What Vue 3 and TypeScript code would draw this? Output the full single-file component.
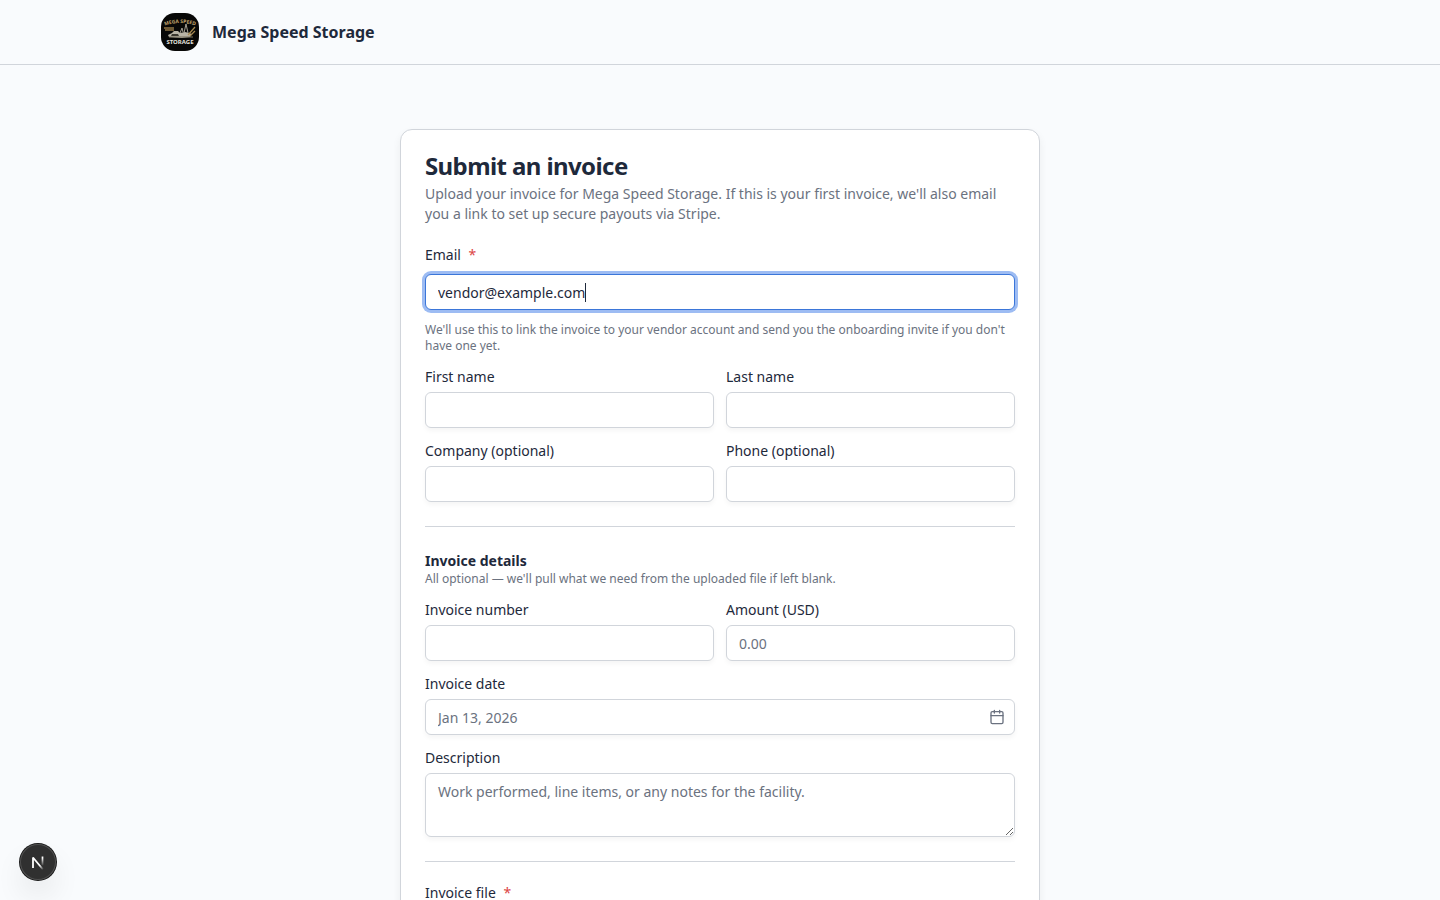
<script setup lang="ts">
import { onMounted, ref, watch } from 'vue'

interface Field {
  id: string
  label: string
  placeholder?: string
  inputmode?: 'text' | 'decimal' | 'tel'
}

const CONTROL_INSET = 13

const email = ref('vendor@example.com')
const emailInput = ref<HTMLInputElement | null>(null)
const emailFocused = ref(false)
const caretLeft = ref(0)

const contactFields: Field[] = [
  { id: 'first-name', label: 'First name' },
  { id: 'last-name', label: 'Last name' },
  { id: 'company', label: 'Company (optional)' },
  { id: 'phone', label: 'Phone (optional)', inputmode: 'tel' },
]

const invoiceFields: Field[] = [
  { id: 'invoice-number', label: 'Invoice number' },
  { id: 'amount', label: 'Amount (USD)', placeholder: '0.00', inputmode: 'decimal' },
]

// The caret is drawn as its own bar, placed after the measured text.
function placeCaret() {
  const input = emailInput.value
  const context = document.createElement('canvas').getContext('2d')
  if (!input || !context) return
  context.font = getComputedStyle(input).font
  const position = input.selectionStart ?? email.value.length
  caretLeft.value = CONTROL_INSET + Math.round(context.measureText(email.value.slice(0, position)).width)
}

watch(email, placeCaret, { flush: 'post' })

onMounted(() => {
  const input = emailInput.value
  if (!input) return
  input.focus({ preventScroll: true })
  input.setSelectionRange(email.value.length, email.value.length)
  placeCaret()
})
</script>

<template>
  <div class="page">
    <header class="topbar">
      <div class="topbar-inner">
        <svg class="brand-logo" viewBox="0 0 40 40" aria-hidden="true">
          <defs>
            <path id="brand-arc" d="M1 15 Q20 7 39 15" />
          </defs>
          <rect x="1" y="1" width="38" height="38" rx="14" fill="#080807" />
          <text class="logo-top"><textPath href="#brand-arc" startOffset="50%" text-anchor="middle">MEGA SPEED</textPath></text>
          <path d="M4 16h10M5 18h9" stroke="#8f7445" stroke-width="1.3" />
          <path d="M8 23l4-2 2-2h4l2 2 5-1 4 1 3 1-2 3-8 1-13-1z" fill="#b9b4a6" />
          <path d="M12 22h6l1 2h-8z" fill="#3b382f" />
          <path d="M20 21l2-5 1 4M24 21l2-9 2 9" fill="none" stroke="#a5a093" stroke-width="1" />
          <path d="M28 23l7-8M30 24l5-5" stroke="#a88a50" stroke-width="1.2" />
          <path d="M9 25h24" stroke="#77705f" stroke-width="1" />
          <text class="logo-bottom" x="20" y="32" text-anchor="middle">STORAGE</text>
        </svg>
        <span class="brand-name">Mega Speed Storage</span>
      </div>
    </header>

    <main class="content">
      <form class="card" @submit.prevent>
        <div class="card-header">
          <h1>Submit an invoice</h1>
          <p>
            Upload your invoice for Mega Speed Storage. If this is your first invoice, we'll also email
            you a link to set up secure payouts via Stripe.
          </p>
        </div>

        <section class="group">
          <div class="field field-email">
            <label for="email">Email <span class="required">*</span></label>
            <div class="control-wrap">
              <input
                id="email"
                ref="emailInput"
                v-model="email"
                class="control email"
                type="text"
                inputmode="email"
                required
                spellcheck="false"
                @focus="emailFocused = true"
                @blur="emailFocused = false"
                @keyup="placeCaret"
                @click="placeCaret"
              />
              <span v-if="emailFocused" class="caret" :style="{ left: caretLeft + 'px' }"></span>
            </div>
            <p class="hint">
              We'll use this to link the invoice to your vendor account and send you the onboarding invite if you don't
              have one yet.
            </p>
          </div>
          <div class="columns">
            <div v-for="field in contactFields" :key="field.id" class="field">
              <label :for="field.id">{{ field.label }}</label>
              <input :id="field.id" class="control" type="text" :inputmode="field.inputmode" />
            </div>
          </div>
        </section>

        <hr />

        <section class="group">
          <div>
            <h2>Invoice details</h2>
            <p class="hint">All optional — we'll pull what we need from the uploaded file if left blank.</p>
          </div>
          <div class="columns">
            <div v-for="field in invoiceFields" :key="field.id" class="field">
              <label :for="field.id">{{ field.label }}</label>
              <input :id="field.id" class="control" type="text" :inputmode="field.inputmode" :placeholder="field.placeholder" />
            </div>
          </div>
          <div class="field">
            <label for="invoice-date">Invoice date</label>
            <div class="control-wrap">
              <input id="invoice-date" class="control date" type="text" placeholder="Jan 13, 2026" />
              <button class="date-button" type="button" aria-label="Select date">
                <svg viewBox="0 0 24 24" aria-hidden="true">
                  <path d="M8 2v4M16 2v4M3 10h18" />
                  <rect x="3" y="4" width="18" height="18" rx="2" />
                </svg>
              </button>
            </div>
          </div>
          <div class="field">
            <label for="description">Description</label>
            <textarea id="description" class="control" placeholder="Work performed, line items, or any notes for the facility."></textarea>
          </div>
        </section>

        <hr />

        <div class="field">
          <label for="invoice-file">Invoice file <span class="required">*</span></label>
          <input id="invoice-file" class="control" type="file" />
        </div>
      </form>
    </main>

    <button class="dev-badge" type="button" aria-label="Developer tools">
      <svg viewBox="0 0 36 36" aria-hidden="true">
        <defs>
          <linearGradient id="fade-diagonal" gradientUnits="userSpaceOnUse" x1="18" y1="18" x2="24" y2="25">
            <stop offset="0.4" stop-color="#fff" />
            <stop offset="1" stop-color="#fff" stop-opacity="0" />
          </linearGradient>
          <linearGradient id="fade-stem" gradientUnits="userSpaceOnUse" x1="0" y1="12" x2="0" y2="22">
            <stop offset="0.2" stop-color="#fff" />
            <stop offset="1" stop-color="#fff" stop-opacity="0" />
          </linearGradient>
        </defs>
        <path d="M13 24V13.5L23 25.5" fill="none" stroke="url(#fade-diagonal)" stroke-width="1.8" stroke-linejoin="bevel" />
        <path d="M22.5 12.5v9" stroke="url(#fade-stem)" stroke-width="1.7" />
      </svg>
    </button>
  </div>
</template>

<style>
html {
  scrollbar-width: none;
}
body {
  background: #f9fbfd;
}
</style>

<style scoped>
* {
  box-sizing: border-box;
}
.page {
  min-height: 100vh;
  background: #f9fbfd;
  color: #1e293b;
  font-family: 'Noto Sans', sans-serif;
  font-size: 14px;
  line-height: 20px;
}
h1,
h2,
p {
  margin: 0;
}
.topbar {
  border-bottom: 1px solid #d1d5db;
}
.topbar-inner {
  display: flex;
  align-items: center;
  gap: 12px;
  height: 64px;
  max-width: 1152px;
  margin: 0 auto;
  padding: 0 16px;
}
.brand-logo {
  width: 40px;
  height: 40px;
}
.logo-top {
  font-family: 'Open Sans', sans-serif;
  font-size: 5px;
  font-weight: 700;
  fill: #c2a56d;
}
.logo-bottom {
  font-family: 'Noto Sans', sans-serif;
  font-size: 6px;
  font-weight: 700;
  fill: #e5e4df;
}
.brand-name {
  font-size: 16px;
  font-weight: 700;
  line-height: 24px;
}
.content {
  padding: 64px 16px;
}
.card {
  display: flex;
  flex-direction: column;
  gap: 24px;
  max-width: 640px;
  margin: 0 auto;
  padding: 24px;
  border: 1px solid #d1d5db;
  border-radius: 12px;
  background: #fff;
  box-shadow: 0 4px 8px rgb(0 0 0 / 6%);
}
.card-header {
  display: flex;
  flex-direction: column;
  gap: 6px;
  color: #6b7280;
}
h1 {
  color: #1e293b;
  font-size: 24px;
  font-weight: 700;
  line-height: 24px;
  letter-spacing: -0.025em;
}
h2 {
  font-size: 14px;
  font-weight: 700;
  line-height: 20px;
}
.group {
  display: flex;
  flex-direction: column;
  gap: 16px;
}
.columns {
  display: grid;
  grid-template-columns: 1fr 1fr;
  gap: 16px 12px;
}
.field {
  display: flex;
  flex-direction: column;
  gap: 8px;
}
.field-email {
  gap: 12px;
}
label {
  line-height: 14px;
}
.required {
  margin-left: 4px;
  color: #dc4545;
}
.hint {
  color: #6b7280;
  font-size: 12px;
  line-height: 16px;
}
hr {
  width: 100%;
  height: 1px;
  margin: 0;
  border: 0;
  background: #d1d5db;
}
.control-wrap {
  position: relative;
}
.control {
  display: block;
  width: 100%;
  height: 36px;
  padding: 4px 12px;
  border: 1px solid #d1d5db;
  border-radius: 6px;
  outline: none;
  background: #fff;
  box-shadow: 0 3px 5px rgb(0 0 0 / 4%);
  color: #1e293b;
  font: inherit;
}
.control::placeholder {
  color: #6b7280;
  opacity: 1;
}
.control:focus {
  border-color: #3b76d9;
  box-shadow: 0 0 0 3px #9dbcf3;
}
.email {
  caret-color: transparent;
}
.caret {
  position: absolute;
  top: 9px;
  width: 1px;
  height: 19px;
  background: #1e293b;
  pointer-events: none;
}
textarea.control {
  height: 64px;
  padding: 8px 12px;
  resize: vertical;
}
.date {
  padding-right: 36px;
}
.date-button {
  position: absolute;
  top: 6px;
  right: 6px;
  display: grid;
  place-items: center;
  width: 24px;
  height: 24px;
  padding: 0;
  border: 0;
  background: none;
}
.date-button svg {
  width: 16px;
  height: 16px;
  fill: none;
  stroke: #6b7280;
  stroke-width: 2;
  stroke-linecap: round;
  stroke-linejoin: round;
}
.dev-badge {
  position: fixed;
  bottom: 20px;
  left: 20px;
  width: 36px;
  height: 36px;
  padding: 0;
  border: 0;
  border-radius: 50%;
  background: #303030;
  box-shadow:
    0 0 0 1px #171717,
    inset 0 0 0 1px #505050,
    0 16px 32px -8px rgb(0 0 0 / 24%);
}
.dev-badge svg {
  display: block;
  width: 36px;
  height: 36px;
}
</style>
